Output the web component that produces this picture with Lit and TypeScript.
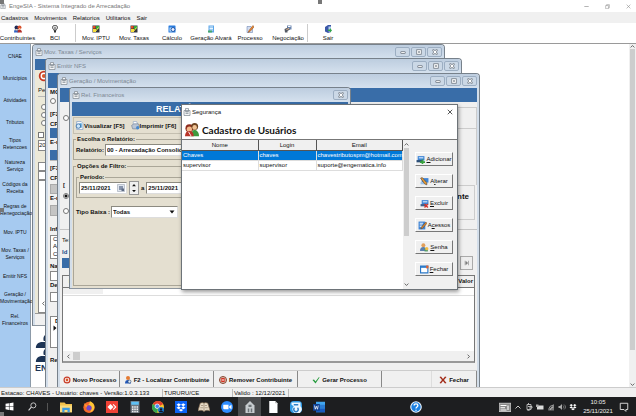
import { LitElement, html, css, svg, nothing } from "lit";
import { customElement, property } from "lit/decorators.js";

const ico = (body: unknown, size = "s8") =>
  html`<svg class="ico ${size}" viewBox="0 0 16 16" aria-hidden="true">${body}</svg>`;

const art: Record<string, unknown> = {
  people: svg`<circle cx="5" cy="5" r="4" fill="#222b55"/><circle cx="11" cy="5" r="4" fill="#d8502c"/><path d="M0 15c0-5 2-7 5-7s4 2 4 7z" fill="#2f62c4"/><path d="M7 15c0-5 2-6 4-6s5 2 5 6z" fill="#b3322c"/><path d="M3 8h4v3H3z" fill="#f3c79e"/><path d="M10 6h3v3h-3z" fill="#f3c79e"/>`,
  bulb: svg`<path d="M3 5c0-6 10-6 10 0 0 3-3 4-3 6H6c0-2-3-3-3-6z" fill="#ddd" stroke="#444" stroke-width="2"/><path d="M6 12h4v3H6z" fill="#333"/><path d="M8 4v6" stroke="#555" stroke-width="2"/>`,
  book: svg`<rect x="1" y="1" width="14" height="14" fill="#34363c"/><path d="M2 2h5v5H2z" fill="#e34b24"/><path d="M8 2h6v6H8z" fill="#2fa83c"/><path d="M2 8h6v6H2z" fill="#f5da36"/><path d="M4 9l3 4 6-8" fill="none" stroke="#f5e94c" stroke-width="2"/>`,
  calc: svg`<rect x="1" y="1" width="14" height="14" rx="1" fill="#287bdd"/><path d="M3 5h8v8H3z" fill="#bfe2ff"/><circle cx="10" cy="9" r="4" fill="#eef" stroke="#1e57a8" stroke-width="2"/>`,
  sheet: svg`<path d="M3 1h11v14H3z" fill="#5aa5e8"/><path d="M5 4h7M5 7h7M5 10h7" stroke="#e8f5ff" stroke-width="2"/><path d="M2 11h8v4H2z" fill="#4aa86a"/>`,
  pen: svg`<path d="M2 3h8l3 3v9H2z" fill="#d3ddf0" stroke="#5b76a8"/><path d="M14 1L6 11l-2 4 4-2 8-9z" fill="#e88731" stroke="#8c4a19"/>`,
  deal: svg`<path d="M6 1h9v8H6z" fill="#6c87b0"/><path d="M8 3h5" stroke="#fff" stroke-width="2"/><path d="M1 8l7-3 4 4-5 3v3H2z" fill="#565b66"/><path d="M5 9l5-2" stroke="#f0bf93" stroke-width="2"/>`,
  door: svg`<path d="M2 4l6-4h6v14l-6 2-6-3z" fill="#3b58a8"/><path d="M9 3h5v10H9z" fill="#b8d0ef"/><path d="M8 9h4V6l4 5-4 4v-3H8z" fill="#2fa648"/>`,
  app: svg`<path d="M2 5h12v10H2zM5 1h6v6H5z" fill="#f4f5f6" stroke="#858d95" stroke-width="1.5"/><path d="M5 8h6M5 11h6" stroke="#858d95" stroke-width="1.5"/>`,
  view: svg`<path d="M3 1h8l3 3v11H3z" fill="#fff" stroke="#5b86bd"/><path d="M8 4h4v8H8z" fill="#4ba1d8"/><circle cx="6" cy="9" r="4" fill="#cfe7fa" stroke="#356ca5" stroke-width="1.5"/>`,
  print: svg`<path d="M4 1h6l2 6H4z" fill="#fff" stroke="#7d98bb"/><path d="M1 8l4-3h8l2 4-3 5H3z" fill="#b9c5d6" stroke="#67768c"/><circle cx="12" cy="12" r="3" fill="#4688cf"/>`,
  couple: svg`<circle cx="5" cy="6" r="4.5" fill="#8e2b1c"/><circle cx="11" cy="4" r="4" fill="#6e4522"/><circle cx="5" cy="7" r="3" fill="#f2b98c"/><circle cx="11" cy="5" r="2.6" fill="#f0c294"/><path d="M7 15c0-5 2-7 4-7s5 2 5 7z" fill="#3f9a3e"/><path d="M0 15c0-4 2-6 5-6s5 2 5 6z" fill="#b9352a"/><path d="M4 10l3 5" stroke="#fff"/>`,
  add: svg`<path d="M3 2h12v8H3z" fill="#3d84d6"/><path d="M5 4h8v2H5z" fill="#d7ecff"/><path d="M1 9h10v4H1z" fill="#2b4d78"/><path d="M10 8h3v3h3v3h-3v2h-3v-2H7v-3h3z" fill="#36a13c"/>`,
  edit: svg`<path d="M3 2h12v8H3z" fill="#3d84d6"/><path d="M1 9h12v4H1z" fill="#9cc2ea"/><path d="M1 2l3-1 8 9v4l-4-2z" fill="#e79a33" stroke="#4d3e31"/>`,
  del: svg`<path d="M3 2h12v8H3z" fill="#3d84d6"/><path d="M5 4h8v2H5z" fill="#d7ecff"/><path d="M1 9h10v4H1z" fill="#3d5f8c"/><path d="M8 9l6 6m0-6l-6 6" stroke="#d5332c" stroke-width="2.5"/>`,
  access: svg`<path d="M1 1h12v14H1z" fill="#3d84d6"/><path d="M3 4h6M3 7h5M3 10h4" stroke="#fff" stroke-width="1.5"/><path d="M14 2l2 2-8 9-3 1 1-3z" fill="#e98c2c" stroke="#5a3c1d"/>`,
  key: svg`<circle cx="6" cy="4" r="3.5" fill="#e3a05a"/><path d="M0 14c0-5 2-7 6-7s5 2 5 7z" fill="#5b7fae"/><path d="M8 9h6v6H8z" fill="#4f9b6b"/><circle cx="12" cy="10" r="3" fill="#f2bc46"/>`,
  close: svg`<path d="M1 2h13v12H1z" fill="#fff" stroke="#2a78c8" stroke-width="2"/><path d="M1 2h13v3H1z" fill="#2a78c8"/><path d="M11 1h4v5h-4z" fill="#e2622e"/>`,
  ring: svg`<circle cx="8" cy="8" r="7" fill="#c73a24"/><circle cx="8" cy="8" r="4.6" fill="#fff"/><circle cx="8" cy="8" r="2.8" fill="#d9592d"/>`,
  find: svg`<circle cx="8" cy="4" r="4" fill="#e47a31"/><path d="M2 15c0-5 2-7 6-7s6 2 6 7z" fill="#2358b8"/><circle cx="11" cy="11" r="3" fill="#d8ecff" stroke="#24344e"/>`,
  remove: svg`<circle cx="8" cy="8" r="7" fill="#dcd3c3" stroke="#84402c" stroke-width="2"/><circle cx="8" cy="8" r="4.6" fill="#d42f20"/><path d="M5 8h6" stroke="#fff" stroke-width="2"/>`,
  check: svg`<path d="M1 8l3-1 3 4 7-9 1 1-8 12z" fill="#239a3b"/>`,
  cross: svg`<path d="M1 2l3-1 4 5 4-5 3 1-5 6 5 6-3 1-4-5-4 5-3-1 5-6z" fill="#a12b18"/>`,
  win: svg`<path d="M1 3l6-1v5.500H1zM8 2l7-1v6.500H8zM1 8.500h6V14l-6-1zM8 8.500h7V15l-7-1z" fill="#fff"/>`,
  search: svg`<circle cx="9.500" cy="6" r="4.500" fill="none" stroke="#ddd" stroke-width="1.5"/><path d="M6 9l-5 6" stroke="#ddd" stroke-width="1.8"/>`,
  folder: svg`<path d="M0 2h6l2 2h8v11H0z" fill="#f2c14b"/><path d="M0 6h16v9H0z" fill="#fbdb7c"/><path d="M3 9h10v6h-3v-3H6v3H3z" fill="#3c9be0"/>`,
  fox: svg`<circle cx="8" cy="8.500" r="7.500" fill="#f46a2a"/><path d="M9 0c5 2 7 6 6 10-1 3-4 5-6 5 4-4 3-8-2-10 2-1 2-3 2-5z" fill="#fdc535"/><circle cx="8" cy="9" r="3.500" fill="#7048cc"/><path d="M1 3l5 3-2 3z" fill="#fd9a31"/>`,
  any: svg`<path d="M0 0h16v16H0z" fill="#ee4135"/><path d="M6 4l4 4-4 4-4-4z" fill="#fff"/><path d="M10 4l4 4-4 4-1-1 3-3-3-3z" fill="#fff"/>`,
  calculator: svg`<path d="M2 0h12v16H2z" fill="#6f7780"/><path d="M3 1h10v4H3z" fill="#5dc0f5"/><path d="M4 8h2m1 0h2m1 0h2M4 11h2m1 0h2m1 0h2M4 14h2m1 0h2m1 0h2" stroke="#f1f1f1" stroke-width="2"/>`,
  chrome: svg`<circle cx="8" cy="8" r="8" fill="#f8c92e"/><path d="M8 8L1 4a8 8 0 0 1 14 0z" fill="#e2402f"/><path d="M8 8L1 4a8 8 0 0 0 6 12z" fill="#34a550"/><circle cx="7" cy="7" r="3" fill="#4688f1" stroke="#fff"/><circle cx="12" cy="12" r="4" fill="#1677c9"/><circle cx="12" cy="11" r="1.500" fill="#112"/><path d="M9 15c1-3 5-3 6 0z" fill="#112"/>`,
  drop: svg`<path d="M0 0h16v16H0z" fill="#0b63f5"/><path d="M5 3l3 2-3 2-3-2zM11 3l3 2-3 2-3-2zM5 7l3 2-3 2-3-2zM11 7l3 2-3 2-3-2zM8 10.500l3 1.500-3 2-3-2z" fill="#fff"/>`,
  reader: svg`<path d="M0 13L3 3c2-1 4-1 5 0 1-1 3-1 5 0l3 10c-3-1-6-1-8 1-2-2-5-2-8-1z" fill="#e8ddc9" stroke="#8d7458"/><path d="M8 3v10M4 6h3M9 6h3M3 9h4M9 9h4" stroke="#9c8a74"/>`,
  zoom: svg`<circle cx="8" cy="8" r="8" fill="#2d8cff"/><path d="M3 5h7v6H4L3 10zM11 7l3-2v6l-3-2z" fill="#fff"/>`,
  house: svg`<path d="M8 0l6 6v10H2V6z" fill="#c8cccf"/><path d="M6 5h4v3H6zM5 10h2v5H5zM9 10h2v5H9z" fill="#6d7377"/>`,
  doc: svg`<path d="M3 0h8l3 3v13H3z" fill="#fff"/><path d="M11 0v3h3z" fill="#aaa"/>`,
  team: svg`<rect width="16" height="16" rx="5" fill="#2f9be6"/><path d="M2 2h12v5a6 6 0 1 1-9 0L2 5z" fill="#eef8ff"/><path d="M6 9a3 3 0 1 0 4 0M5 5h6" fill="none" stroke="#2f7fc6" stroke-width="2"/>`,
  word: svg`<path d="M4 1h12v14H4z" fill="#41a5ee"/><path d="M4 5h12v5H4z" fill="#2b7cd3"/><path d="M4 10h12v5H4z" fill="#185abd"/><path d="M0 4h9v9H0z" fill="#103f91"/><path d="M2 6l1 5 1.500-4L6 11l1-5" fill="none" stroke="#fff"/>`,
  help: svg`<circle cx="8" cy="8" r="7" fill="#1a7fe0" stroke="#e9f3fd" stroke-width="1.500"/><path d="M5.500 6c0-3 5-3 5 0 0 2-2.500 2-2.500 4M8 11.500v1.500" fill="none" stroke="#fff" stroke-width="1.800"/>`,
  keyb: svg`<path d="M0 3h16v11H0z" fill="#8a8a8a" stroke="#ddd"/><path d="M2 6h8M2 9h6M2 12h8M12 6v6" stroke="#fff" stroke-width="1.500"/>`,
  up: svg`<path d="M3 11l5-5 5 5" fill="none" stroke="#ddd" stroke-width="1.800"/>`,
  usb: svg`<path d="M4 3h8v10H4zM7 0v3M6 13v3h4M6 7h8v3H8" fill="none" stroke="#ccc" stroke-width="1.700"/>`,
  batt: svg`<path d="M2 5h13v8H2z" fill="#ddd"/><path d="M0 3h5v5H0z" fill="#aaa"/>`,
  wifi: svg`<path d="M2 15L14 2v13z" fill="#777"/><path d="M3 13a11 11 0 0 1 10-9M6 14a8 8 0 0 1 7-6" fill="none" stroke="#ccc" stroke-width="1.400"/>`,
  vol: svg`<path d="M1 6h3l4-4v12l-4-4H1z" fill="#aaa"/><path d="M10 5c2 2 2 4 0 6M12 3c4 3 4 7 0 10" fill="none" stroke="#999" stroke-width="1.400"/>`,
  dbox: svg`<path d="M4.500 2L8 4.300 4.500 6.600 1 4.300zM11.500 2L15 4.300l-3.500 2.300L8 4.300zM4.500 6.600L8 9l-3.500 2.200L1 9zM11.500 6.600L15 9l-3.500 2.200L8 9zM8 10l3.500 2.300L8 14.600l-3.500-2.300z" fill="#fff"/>`,
  note: svg`<path d="M2 2h12v10h-3v3l-3-3H2z" fill="none" stroke="#ddd" stroke-width="1.500"/>`,
  cal: svg`<path d="M1 1h14v14H1z" fill="#dfe5ee" stroke="#8b95a5"/><path d="M4 4h8v8H4z" fill="#8895ad"/><path d="M9 9h5v5H9z" fill="#5e6c85"/>`,
  min: svg`<rect x="2" y="7" width="12" height="5" rx="1" fill="#fff" stroke="#68727c" stroke-width="2"/>`,
  max: svg`<rect x="2" y="2" width="12" height="12" fill="#fff" stroke="#68727c" stroke-width="2"/><rect x="6" y="6" width="4" height="4" fill="#68727c"/>`,
  x: svg`<path d="M2 2h4l2 3 2-3h4v3l-3 3 3 3v3h-4l-2-3-2 3H2v-3l3-3-3-3z" fill="#fff" stroke="#68727c" stroke-width="2"/>`,
  thinmin: svg`<path d="M1 8h14" stroke="#888" stroke-width="2"/>`,
  thinmax: svg`<path d="M2 5h9v10H2zM5 5V2h9v10h-3" fill="none" stroke="#888" stroke-width="1.600"/>`,
  thinx: svg`<path d="M2 2l12 12M14 2L2 14" stroke="#888" stroke-width="1.800"/>`,
  darkx: svg`<path d="M2 2l12 12M14 2L2 14" stroke="#222" stroke-width="2"/>`,
  left: svg`<path d="M11 2L5 8l6 6" fill="none" stroke="#444" stroke-width="2.500"/>`,
  right: svg`<path d="M5 2l6 6-6 6" fill="none" stroke="#444" stroke-width="2.500"/>`,
  top: svg`<path d="M2 11l6-6 6 6" fill="none" stroke="#444" stroke-width="2.500"/>`,
  down: svg`<path d="M2 5l6 6 6-6" fill="none" stroke="#444" stroke-width="2.500"/>`,
  solidup: svg`<path d="M3 11h10L8 5z" fill="#111"/>`,
  soliddown: svg`<path d="M3 5h10l-5 6z" fill="#111"/>`,
  solidright: svg`<path d="M4 1v14l8-7z" fill="#111"/>`,
  last: svg`<path d="M3 2v12M12 2v12M5 4v8l5-4z" fill="#777" stroke="#777" stroke-width="1.500"/>`,
  brand: svg`<path d="M16 0c-6 0-7 4-6 8h6zM16 9H9c-6 0-8 3-8 7h15z" fill="#1d3455"/>`,
};

const shared = css`
  *, *::before, *::after { box-sizing: border-box; }
  button, input, select {
    font: inherit; color: inherit; margin: 0; padding: 0; border: 0;
    border-radius: 0; background: none; appearance: none; min-width: 0;
  }
  .ico { display: block; flex: none; }
  .s5 { width: 5px; height: 5px; }
  .s6 { width: 6px; height: 6px; }
  .s8 { width: 8px; height: 8px; }
  .s9 { width: 9px; height: 9px; }
  .s10 { width: 10px; height: 10px; }
  .s12 { width: 12px; height: 12px; }
  .s14 { width: 14px; height: 14px; }
`;

@customElement("mdi-window")
class MdiWindow extends LitElement {
  @property() heading = "";
  @property() controls = "min,max,x";

  static styles = [shared, css`
    :host {
      display: flex; flex-direction: column; overflow: hidden;
      border: 1px solid #77818b; border-bottom-color: #8c959e; border-radius: 4px 4px 0 0;
      background: #f0f0f0;
    }
    .bar {
      display: flex; align-items: center; flex: none; height: 14px; gap: 1px; padding: 0 2px;
      background: linear-gradient(#bdcddf, #d5e1ee);
      color: #7d8894;
    }
    .name { flex: 1; white-space: nowrap; }
    .buttons { display: flex; gap: 1px; }
    .buttons button {
      display: grid; place-items: center; width: 15px; height: 10px;
      border: 1px solid #9caec2; border-radius: 2px; background: #cbd8e6;
    }
    .body { flex: 1; min-height: 0; display: flex; flex-direction: column; padding: 0 2px; background: #d3deea; }
    ::slotted(*) { flex: 1; min-height: 0; }
  `];

  render() {
    return html`
      <div class="bar">
        ${ico(art.app, "s8")}
        <span class="name">${this.heading}</span>
        <span class="buttons">${this.controls.split(",").map(
          (c) => html`<button aria-label=${c}>${ico(art[c], "s6")}</button>`)}</span>
      </div>
      <div class="body"><slot></slot></div>`;
  }
}

const menus = ["Cadastros", "Movimentos", "Relatorios", "Utilitarios", "Sair"];
const tools: [string, string][] = [
  ["people", "Contribuintes"], ["bulb", "BCI"], ["", ""], ["book", "Mov. IPTU"], ["book", "Mov. Taxas"],
  ["calc", "Cálculo"], ["sheet", "Geração Alvará"], ["pen", "Processo"], ["deal", "Negociação"], ["", ""],
  ["door", "Sair"],
];
const side = ["CNAE", "Municípios", "Atividades", "Tributos", "Tipos Retencoes", "Natureza Serviço",
  "Códigos da Receita", "Regras de Renegociação", "Mov. IPTU", "Mov. Taxas / Serviços", "Emitir NFS",
  "Geração / Movimentação", "Rel. Financeiros"];
const users = [
  ["Chaves", "chaves", "chavestributospm@hotmail.com"],
  ["supervisor", "supervisor", "suporte@engematica.info"],
];
const actions: [string, string, string, string][] = [
  ["add", "", "A", "dicionar"], ["edit", "A", "l", "terar"], ["del", "", "E", "xcluir"],
  ["access", "A", "c", "essos"], ["key", "", "S", "enha"], ["close", "", "F", "echar"],
];
const taskIcons = ["folder", "fox", "any", "calculator", "chrome", "drop", "reader", "zoom", "house", "doc", "team", "word"];

@customElement("app-root")
class AppRoot extends LitElement {
  static styles = [shared, css`
    :host {
      display: flex; flex-direction: column; position: relative; min-height: 100vh; overflow: hidden;
      background: #fff; color: #111;
      font: 6px/8px "Liberation Sans", sans-serif;
      white-space: nowrap;
    }
    .handle { position: absolute; width: 4px; height: 4px; background: #777; }
    .h-tl { left: 0; top: 0; }
    .h-tc { left: 50%; top: 0; }
    .h-ml { left: 0; top: 50%; }
    .h-bl { left: 0; bottom: 0; }

    .titlebar { display: flex; align-items: center; flex: none; height: 12px; padding: 0 5px 0 0; gap: 3px; color: #777; }
    .titlebar .name { flex: 1; }
    .caption { display: flex; gap: 16px; }
    .menubar { display: flex; align-items: center; flex: none; height: 11px; gap: 6px; padding: 0 1px; background: #f0f0f0; }
    .toolbar { display: flex; flex: none; height: 21px; border-bottom: 1px solid #9a9a9a; }
    .tool { display: flex; flex-direction: column; align-items: center; justify-content: center; flex: none; gap: 1px; width: 38px; }
    .tool:first-child { width: 35px; }
    .tool:nth-child(2) { width: 40px; }
    .tool:nth-child(7) { width: 40px; }
    .sep { width: 1px; margin: 1px 1px 1px 0; background: #ccc; }

    .main { display: flex; flex: 1; min-height: 0; }
    .side { display: flex; flex-direction: column; flex: none; width: 31px; padding-top: 1px; background: #a6caf0; border-right: 1px solid #8c9aa8; }
    .side button { flex: none; height: 22px; width: 30px; font-size: 5px; line-height: 7px; white-space: normal; }
    .desk { position: relative; flex: 1; overflow: hidden; }
    .vscroll { display: flex; flex-direction: column; align-items: center; flex: none; width: 7px; background: #f0f0f0; }
    .vscroll .thumb { flex: 1; width: 5px; background: #cdcdcd; }
    .vscroll .gap { height: 32px; }

    .w1 { position: absolute; left: 1px; top: 0; width: 413px; height: 282px; }
    .w2 { position: absolute; left: 14px; top: 14px; width: 417px; height: 340px; }
    .w3 { position: absolute; left: 26px; top: 29px; width: 423px; height: 340px; }
    .w4 { position: absolute; left: 38px; top: 43px; width: 282px; height: 202px; }
    .brand { position: absolute; left: 4px; top: 290px; width: 14px; color: #1d3455; font-weight: 700; font-size: 9px; line-height: 12px; }

    .band { background: #396da8; }
    .pane { display: grid; align-content: start; background: #f0f0f0; font-weight: 700; overflow: hidden; }
    .white { background: #fff; border: 1px solid #888; }
    .gray { background: #c4c4c4; border: 1px solid #aaa; }
    .rule { border-top: 1px solid #b8b8b8; }
    .pane input[type="radio"], .pane input[type="checkbox"] { display: block; width: 6px; height: 6px; background: #fff; border: 1px solid #777; }
    .pane input[type="radio"] { border-radius: 50%; }
    .pane input[type="radio"]:checked { background: radial-gradient(#111 1px, #fff 2px); }

    .p1 { background: #ece9d8; grid-template-rows: 11px 16px 10px 8px 8px 8px 8px 12px 11px 11px 9px 9px 133px 12px; font-weight: 400; }
    .p1 > * { margin-left: 3px; }
    .p1 > .band, .p1 > .foot { margin-left: 0; }
    .p1 .radio { padding-left: 3px; }
    .p1 .tick { padding-top: 4px; }
    .p1 .foot { background: #f0f0f0; border-top: 1px solid #999; }
    .p1 .list { display: flex; align-items: flex-end; padding: 0 0 6px 2px; }

    .p2 { grid-template-rows: 15px 10px 7px 5px 10px 8px 10px 12px 10px 4px 10px 10px 10px 11px 11px 9px 10px 24px 3px 9px 10px 11px 10px 14px 32px 8px 10px; }
    .p2 > * { margin-left: 2px; }
    .p2 > .band:first-child { margin-left: 0; }
    .p2 .letters { display: grid; padding-left: 2px; line-height: 7px; font-weight: 400; }
    .p2 .cursor { padding-left: 1px; }
    .p2 .cursor b { display: block; padding-left: 3px; }

    .p3 { display: flex; flex-direction: column; }
    .p3 .band { flex: none; height: 14px; }
    .opts { display: flex; justify-content: space-between; flex: none; height: 127px; padding-top: 5px; }
    .stack { display: grid; grid-template-rows: 21px 51px 12px 10px 20px; padding: 0 3px; align-items: center; }
    .right { display: grid; grid-template-rows: 21px 57px 35px; flex: none; width: 40px; }
    .right > * { border: 1px solid #ccc; border-width: 1px 1px 0 0; }
    .right .cap { display: flex; justify-content: flex-end; align-items: flex-start; padding: 7px 5px 0 0; margin-right: 2px; border-bottom-width: 1px; font-size: 8px; }
    .tabs { display: flex; justify-content: space-between; flex: none; height: 46px; border-top: 1px solid #c4c4c4; }
    .tabs .lab { display: grid; grid-template-rows: 12px 12px 10px; align-items: center; align-content: start; width: 14px; padding: 4px 2px; font-weight: 400; }
    .tabs .lab .band { height: 10px; }
    .tabs .lab b { color: #174a86; }
    .nav { align-self: flex-end; display: grid; place-items: center; width: 13px; height: 14px; margin: 0 4px 5px 0; border: 1px solid #aaa; background: #eee; }
    .grid { display: flex; flex-direction: column; flex: none; height: 88px; margin: 0 2px; border: 1px solid #777; border-bottom: 2px solid #999; background: #fff; }
    .grid .head { display: flex; justify-content: space-between; flex: none; height: 12px; padding: 1px 1px 0 6px; border-bottom: 1px solid #777; background: #f0f0f0; }
    .grid .first { flex: none; height: 8px; border-bottom: 1px solid #ddd; }
    .grid .cell { width: 40px; height: 6px; background: #f0f0f0; }
    .grid .fill { flex: 1; }
    .hscroll { display: flex; align-items: center; flex: none; height: 10px; padding: 0 3px; gap: 2px; background: #f0f0f0; }
    .hscroll .thumb { width: 7px; height: 8px; background: #cdcdcd; margin-right: auto; }
    .actions { display: flex; flex: none; height: 17px; margin-top: 7px; border-top: 1px solid #ccc; }
    .actions button { display: flex; align-items: center; justify-content: center; gap: 2px; flex: 0 0 84px; padding-top: 2px; border-right: 1px solid #888; }
    .actions button:first-child { flex-basis: 60px; }
    .actions button:nth-child(2) { flex-basis: 94px; }
    .actions button:last-child { flex-basis: 46px; margin-left: auto; border-left: 1px solid #ddd; }

    .p4 { display: flex; flex-direction: column; background: #e4dfd0; font-weight: 700; }
    .p4 .band { display: flex; align-items: center; flex: none; height: 14px; padding-left: 84px; color: #fff; font-size: 9px; }
    .p4 .cmds { display: flex; align-items: center; gap: 6px; flex: none; height: 17px; margin: 1px; padding-left: 1px; border: 1px solid #c4bfb0; }
    .p4 .cmds button { display: flex; align-items: center; gap: 0; }
    fieldset { margin: 0; min-width: 0; border: 1px solid #aaa698; padding: 0 2px; }
    legend { padding: 0 1px; line-height: 8px; }
    .line { display: flex; align-items: center; gap: 1px; height: 13px; }
    .field { display: flex; align-items: center; height: 12px; padding: 0 1px; background: #fff; border: 1px solid #8c8a80; border-right-color: #ddd; border-bottom-color: #ddd; }
    .report { flex: none; height: 25px; margin: 0 1px 2px; }
    .filters { flex: 1; margin: 0 1px 2px; }
    .period { height: 25px; margin-top: 3px; padding: 0 2px; }
    .period .line { gap: 2px; }
    .date { width: 48px; justify-content: space-between; }
    .date input { width: 36px; }
    .spin { display: grid; width: 10px; height: 14px; place-items: center; border: 1px solid #999; background: #f0f0f0; }
    .kind { margin-top: 7px; }
    .wide { flex: 1; }
    .pick { width: 67px; }
    .pick select { flex: 1; }

    .modal {
      position: absolute; left: 181px; top: 104px; width: 277px; height: 186px;
      display: flex; flex-direction: column; background: #fff; border: 1px solid #6d7378;
      box-shadow: 1px 2px 4px #0006;
    }
    .mbar { display: flex; align-items: center; flex: none; height: 14px; padding: 0 4px 0 1px; gap: 1px; }
    .mbar .name { flex: 1; }
    .mhead { display: flex; align-items: center; flex: none; height: 20px; gap: 3px; padding: 2px 0 0 3px; }
    h1 { margin: 0; font: 700 10px/12px Lato, sans-serif; color: #111; }
    .mbody { display: flex; flex: 1; min-height: 0; background: #f0f0f0; border-top: 1px solid #777; }
    .list-wrap { flex: 1; background: #fff; }
    table { width: 100%; border-collapse: collapse; table-layout: fixed; }
    th { height: 10px; padding: 0; font-weight: 400; background: #f0f0f0; border-right: 1px solid #555; border-bottom: 1px solid #555; }
    td { height: 10px; padding: 0 1px; border-right: 1px solid #ddd; border-bottom: 1px solid #ddd; }
    .c1 { width: 76px; }
    .c2 { width: 58px; }
    .sel td { background: #0078d7; color: #fff; }
    .mscroll { padding: 2px 0; }
    .mscroll .thumb { flex: none; height: 88px; margin-top: 1px; }
    .mscroll .gap { flex: 1; }
    .mbtns { display: flex; flex-direction: column; flex: none; gap: 8px; width: 47px; padding: 12px 4px 0 5px; }
    .mbtns button {
      display: flex; align-items: center; justify-content: center; gap: 1px; height: 14px;
      border: 1px solid #fff; border-right-color: #777; border-bottom-color: #777; background: #f0f0f0;
    }

    .status { display: flex; align-items: center; flex: none; height: 10px; background: #f0f0f0; border-top: 1px solid #ccc; }
    .status span { flex: none; border-right: 1px solid #bbb; padding-left: 1px; }
    .st1 { width: 163px; }
    .st2 { width: 70px; }
    .st3 { width: 56px; }
    .taskbar { display: flex; align-items: center; flex: none; height: 19px; background: #1d1e20; color: #eee; }
    .taskbar button { display: grid; place-items: center; flex: none; width: 23px; height: 19px; }
    .taskbar .on { background: #4a4b4d; }
    .taskbar .start { width: 18px; }
    .taskbar .find { width: 29px; }
    .taskbar .bar { width: 1px; height: 8px; margin-right: 6px; background: #555; }
    .tray { display: flex; align-items: center; gap: 3px; margin-left: auto; padding-right: 7px; }
    .tray .help { margin-right: 74px; }
    .clock { display: grid; width: 32px; margin: 0 2px; text-align: center; line-height: 9px; }
  `];

  private win1() {
    return html`<mdi-window class="w1" heading="Mov. Taxas / Serviços">
      <div class="pane p1">
        <div class="band"></div>
        <div>${ico(art.ring, "s12")}</div>
        <div>Pes</div>
        <div class="rule"></div>
        <label class="radio"><input type="radio" name="r1" aria-label="Opção 1"></label>
        <label class="radio"><input type="radio" name="r1" aria-label="Opção 2"></label>
        <label class="radio"><input type="radio" name="r1" aria-label="Opção 3"></label>
        <div class="tick"><input type="checkbox" checked aria-label="Ano"></div>
        <div class="white">20</div>
        <div></div>
        <div class="white"></div>
        <div class="white"></div>
        <div class="white list">${ico(art.left, "s5")}</div>
        <div class="foot"></div>
      </div>
    </mdi-window>`;
  }

  private win2() {
    return html`<mdi-window class="w2" heading="Emitir NFS">
      <div class="pane p2">
        <div class="band"></div>
        <div>MO</div>
        <div><input type="radio" name="r2" aria-label="Modelo"></div>
        <div></div>
        <div>[F2</div>
        <div>CP</div>
        <div class="band"></div>
        <div>E-m</div>
        <div class="band"></div>
        <div class="rule"></div>
        <div>[F3</div>
        <div>CP</div>
        <div class="gray"></div>
        <div>E-r</div>
        <div class="gray"></div>
        <div></div>
        <div>Inf</div>
        <div class="white letters"><span>C</span><span>A</span><span>C</span></div>
        <div></div>
        <div>Na</div>
        <div class="white"></div>
        <div>De</div>
        <div class="white"></div>
        <div></div>
        <div class="white cursor"><b>D</b>${ico(art.solidright, "s6")}</div>
        <div></div>
        <div>Re</div>
      </div>
    </mdi-window>`;
  }

  private win3() {
    return html`<mdi-window class="w3" heading="Geração / Movimentação">
      <div class="pane p3">
        <div class="band"></div>
        <div class="opts">
          <div class="stack">
            <input type="radio" name="r3" aria-label="Busca">
            <span></span>
            <span>[</span>
            <input type="radio" name="r4" checked aria-label="Pessoa">
            <input type="radio" name="r4" aria-label="Empresa">
          </div>
          <div class="right"><div></div><div></div><div class="cap">nte</div></div>
        </div>
        <div class="tabs">
          <div class="lab"><span>Te:</span><b>Id</b><span class="band"></span></div>
          <button class="nav" aria-label="Último">${ico(art.last, "s6")}</button>
        </div>
        <div class="grid">
          <div class="head"><span>I</span><span>Valor</span></div>
          <div class="first"><div class="cell"></div></div>
          <div class="fill"></div>
          <div class="hscroll">${ico(art.left, "s5")}<div class="thumb"></div>${ico(art.right, "s5")}</div>
        </div>
        <div class="actions">
          <button>${ico(art.ring)}Novo Processo</button>
          <button>${ico(art.find)}F2 - Localizar Contribuinte</button>
          <button>${ico(art.remove)}Remover Contribuinte</button>
          <button>${ico(art.check)}Gerar Processo</button>
          <button>${ico(art.cross)}Fechar</button>
        </div>
      </div>
    </mdi-window>`;
  }

  private win4() {
    return html`<mdi-window class="w4" heading="Rel. Financeiros" controls="x">
      <div class="p4">
        <div class="band">RELATÓRIOS</div>
        <div class="cmds">
          <button>${ico(art.view, "s9")}Visualizar [F5]</button>
          <button>${ico(art.print, "s9")}Imprimir [F6]</button>
        </div>
        <fieldset class="report">
          <legend>Escolha o Relatório:</legend>
          <div class="line">
            <label for="rel">Relatório:</label>
            <span class="field wide"><select id="rel"><option>00 - Arrecadação Consolidada</option></select></span>
          </div>
        </fieldset>
        <fieldset class="filters">
          <legend>Opções de Filtro:</legend>
          <fieldset class="period">
            <legend>Período:</legend>
            <div class="line">
              <span class="field date"><input aria-label="Data inicial" value="25/11/2021">${ico(art.cal, "s8")}</span>
              <button class="spin" aria-label="Ajustar data">${ico(art.solidup, "s6")}${ico(art.soliddown, "s6")}</button>
              <label for="fim">a</label>
              <span class="field date"><input id="fim" value="25/11/2021"></span>
            </div>
          </fieldset>
          <div class="line kind">
            <label for="tipo">Tipo Baixa :</label>
            <span class="field pick"><select id="tipo"><option>Todas</option></select>${ico(art.soliddown, "s8")}</span>
          </div>
        </fieldset>
      </div>
    </mdi-window>`;
  }

  private modal() {
    return html`<section class="modal" role="dialog" aria-label="Segurança">
      <div class="mbar">${ico(art.app)}<span class="name">Segurança</span>
        <button aria-label="Fechar janela">${ico(art.darkx, "s6")}</button></div>
      <div class="mhead">${ico(art.couple, "s14")}<h1>Cadastro de Usuários</h1></div>
      <div class="mbody">
        <div class="list-wrap">
          <table>
            <thead><tr><th class="c1">Nome</th><th class="c2">Login</th><th>Email</th></tr></thead>
            <tbody>${users.map((u, i) => html`<tr class=${i ? "" : "sel"}>${u.map((v) => html`<td>${v}</td>`)}</tr>`)}</tbody>
          </table>
        </div>
        <div class="vscroll mscroll">${ico(art.top, "s5")}<div class="thumb"></div><div class="gap"></div>${ico(art.down, "s5")}</div>
        <div class="mbtns">${actions.map(([icon, a, key, b]) =>
          html`<button>${ico(art[icon], "s9")}<span>${a}<u>${key}</u>${b}</span></button>`)}</div>
      </div>
    </section>`;
  }

  render() {
    return html`
      <header class="titlebar">${ico(art.app, "s6")}
        <span class="name">EngeSIA - Sistema Integrado de Arrecadação</span>
        <span class="caption">
          <button aria-label="Minimizar">${ico(art.thinmin, "s5")}</button>
          <button aria-label="Restaurar">${ico(art.thinmax, "s5")}</button>
          <button aria-label="Fechar">${ico(art.thinx, "s5")}</button>
        </span>
      </header>
      <nav class="menubar">${menus.map((m) => html`<button>${m}</button>`)}</nav>
      <div class="toolbar">${tools.map(([i, t]) =>
        t ? html`<button class="tool">${ico(art[i])}<span>${t}</span></button>` : html`<span class="sep"></span>`)}</div>
      <div class="main">
        <nav class="side">${side.map((s) => html`<button>${s}</button>`)}</nav>
        <main class="desk">
          <div class="brand">${ico(art.brand, "s14")}${ico(art.brand, "s14")}EN</div>
          ${this.win1()}${this.win2()}${this.win3()}${this.win4()}
        </main>
        <div class="vscroll">${ico(art.top, "s5")}<div class="thumb"></div><div class="gap"></div>${ico(art.down, "s5")}</div>
      </div>
      <footer class="status">
        <span class="st1">Estacao: CHAVES - Usuário: chaves - Versão:1.0.3.133</span>
        <span class="st2">TURURU/CE</span>
        <span class="st3">Valido : 12/12/2021</span>
      </footer>
      <div class="taskbar">
        <button class="start" aria-label="Iniciar">${ico(art.win, "s9")}</button>
        <button class="find" aria-label="Pesquisar">${ico(art.search, "s9")}</button>
        <span class="bar"></span>
        ${taskIcons.map((t) => html`<button class=${t === "house" ? "on" : nothing} aria-label=${t}>${ico(art[t], "s12")}</button>`)}
        <div class="tray">
          <span class="help">${ico(art.help, "s12")}</span>
          ${ico(art.keyb, "s12")}${ico(art.up, "s8")}${ico(art.usb, "s8")}${ico(art.batt, "s8")}${ico(art.wifi, "s8")}${ico(art.vol, "s8")}${ico(art.dbox, "s8")}
          <span class="clock"><span>10:05</span><span>25/11/2021</span></span>
          ${ico(art.note, "s10")}
        </div>
      </div>
      ${this.modal()}
      <i class="handle h-tl"></i><i class="handle h-tc"></i><i class="handle h-ml"></i><i class="handle h-bl"></i>`;
  }
}
